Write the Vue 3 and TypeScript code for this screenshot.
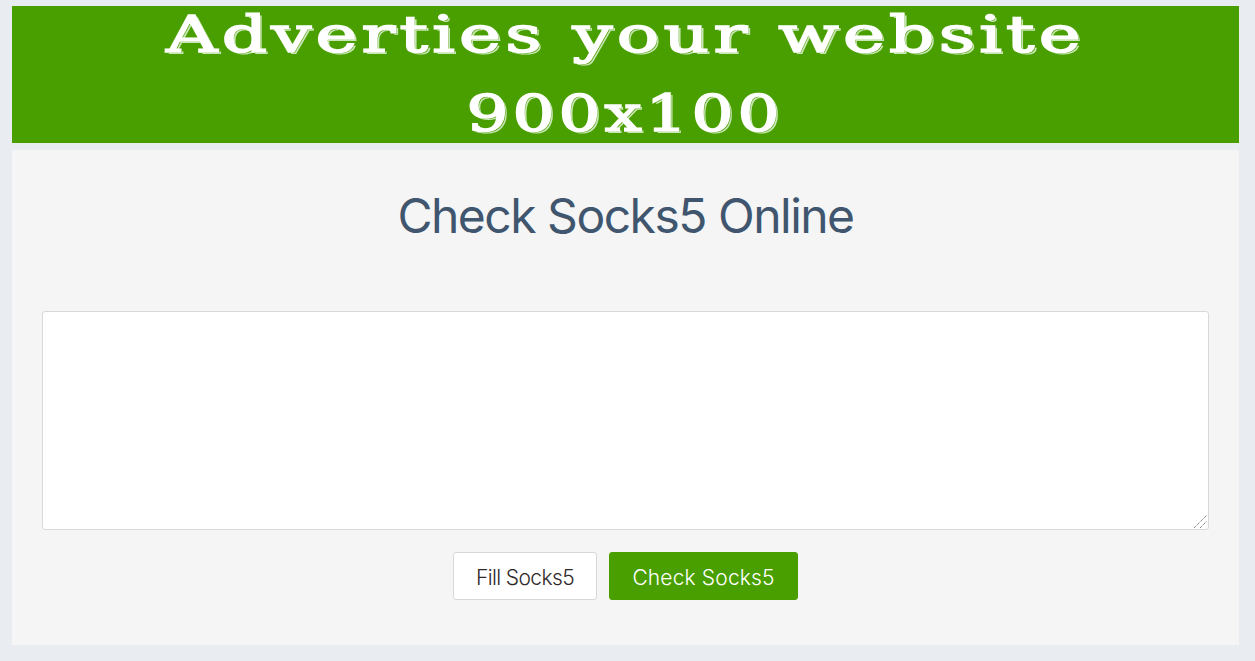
<script setup lang="ts">
const title = 'Check Socks5 Online'
</script>

<template>
  <div class="page">
    <div class="banner">
      <div class="ad-line"><span class="ad-text ad-wide">Adverties your website</span></div>
      <div class="ad-line ad-size"><span class="ad-text ad-digits">900x100</span></div>
    </div>
    <main class="card">
      <h1 class="title">{{ title }}</h1>
      <textarea class="box" aria-label="Socks5 list"></textarea>
      <div class="actions">
        <button type="button" class="btn btn-light">Fill Socks5</button>
        <button type="button" class="btn btn-green">Check Socks5</button>
      </div>
    </main>
  </div>
</template>

<style>
html, body { margin: 0; background: #e9edf2; }
</style>

<style scoped>
.page {
  box-sizing: border-box;
  height: 661px;
  padding: 6px 16px 16px 12px;
  background: #e9edf2;
  display: flex;
  flex-direction: column;
  gap: 7px;
}
.banner {
  box-sizing: border-box;
  height: 137px;
  flex: none;
  padding-top: 3px;
  background: #4a9f00;
  color: #fff;
  text-align: center;
  font-family: "DejaVu Serif", serif;
  font-weight: 400;
  font-size: 50px;
  line-height: 52px;
  letter-spacing: 3px;
  -webkit-text-stroke: 1.6px #fff;
  text-shadow: 1px 1px 0 #4a9f00, 2px 2px 0 #c9e6b4;
}
.ad-line { height: 52px; }
.ad-size { margin-top: 27px; }
.ad-text { display: inline-block; transform-origin: center; }
.ad-wide { transform: scaleX(1.415); }
.ad-digits { transform: scaleX(1.32); }
.card {
  flex: 1;
  background: #f5f5f5;
  padding: 0 30px;
  display: flex;
  flex-direction: column;
  align-items: stretch;
}
.title {
  margin: 37px 0 0;
  height: 124px;
  text-align: center;
  font-family: Inter, sans-serif;
  font-weight: 400;
  font-size: 48px;
  line-height: 58px;
  letter-spacing: -1.5px;
  color: #3f566e;
}
.box {
  box-sizing: border-box;
  display: block;
  width: 100%;
  height: 219px;
  margin: 0;
  background: #fff;
  border: 1px solid #d8d8d8;
  border-radius: 3px;
  outline: none;
  resize: both;
}
.box::-webkit-resizer {
  background: url("data:image/svg+xml,%3Csvg xmlns='http://www.w3.org/2000/svg' width='15' height='15'%3E%3Cpath d='M1 14L14 1M7 14L14 7' stroke='%23555' stroke-width='1' stroke-dasharray='1 1' fill='none'/%3E%3C/svg%3E") no-repeat;
}
.actions {
  margin-top: 22px;
  display: flex;
  justify-content: center;
  gap: 12px;
}
.btn {
  box-sizing: border-box;
  height: 48px;
  margin: 0;
  border-radius: 3px;
  font-family: Inter, sans-serif;
  font-size: 21px;
  font-weight: 300;
  padding: 3px 0 0;
}
.btn-light {
  width: 144px;
  background: #fff;
  border: 1px solid #d8d8d8;
  color: #2f2a2a;
  letter-spacing: -0.6px;
}
.btn-green {
  width: 189px;
  background: #4a9f00;
  border: 1px solid #4a9f00;
  color: #fff;
  letter-spacing: 0.15px;
}
</style>
